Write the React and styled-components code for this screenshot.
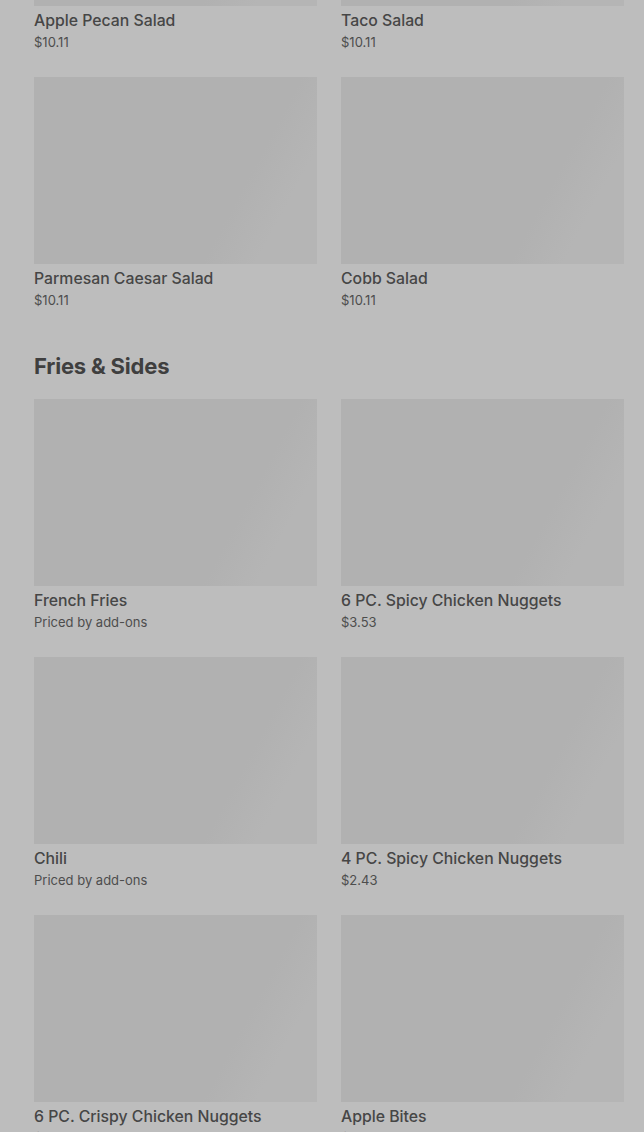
import React from "react";
import styled, { createGlobalStyle } from "styled-components";

const Global = createGlobalStyle`
  html, body { margin: 0; padding: 0; background: #bdbdbd; }
  body { font-family: Inter, "Noto Sans", "Liberation Sans", sans-serif; overflow: hidden; }
`;

const Page = styled.div`
  height: 1132px;
  overflow: hidden;
  background: #bdbdbd;
`;

const Content = styled.div`
  margin-top: -181px;
  padding: 0 20px 0 34px;
`;

const Section = styled.section`
  & + & { margin-top: 42px; }
`;

const Heading = styled.h2`
  margin: 0 0 19px;
  font-size: 22px;
  line-height: 28px;
  font-weight: 700;
  letter-spacing: -0.2px;
  color: #3f3f3f;
`;

const Grid = styled.div`
  display: grid;
  grid-template-columns: 283px 283px;
  column-gap: 24px;
  row-gap: 25px;
`;

const Card = styled.div`
  display: flex;
  flex-direction: column;
`;

const Thumb = styled.div`
  height: 187px;
  background: linear-gradient(118deg, #b1b1b1 0%, #b1b1b1 70%, #b5b5b5 84%, #b5b5b5 100%);
  margin-bottom: 5px;
`;

const Title = styled.div`
  font-size: 15.8px;
  line-height: 20px;
  font-weight: 500;
  color: #464646;
`;

const Price = styled.div`
  margin-top: 1px;
  font-size: 13px;
  line-height: 20px;
  font-weight: 400;
  color: #4d4d4d;
`;

const sections = [
  {
    name: null,
    items: [
      ["Apple Pecan Salad", "$10.11"],
      ["Taco Salad", "$10.11"],
      ["Parmesan Caesar Salad", "$10.11"],
      ["Cobb Salad", "$10.11"],
    ],
  },
  {
    name: "Fries & Sides",
    items: [
      ["French Fries", "Priced by add-ons"],
      ["6 PC. Spicy Chicken Nuggets", "$3.53"],
      ["Chili", "Priced by add-ons"],
      ["4 PC. Spicy Chicken Nuggets", "$2.43"],
      ["6 PC. Crispy Chicken Nuggets", "$3.53"],
      ["Apple Bites", "$1.61"],
    ],
  },
];

export default function App() {
  return (
    <Page>
      <Global />
      <Content>
        {sections.map((s, i) => (
          <Section key={i}>
            {s.name && <Heading>{s.name}</Heading>}
            <Grid>
              {s.items.map(([t, p]) => (
                <Card key={t}>
                  <Thumb />
                  <Title>{t}</Title>
                  <Price>{p}</Price>
                </Card>
              ))}
            </Grid>
          </Section>
        ))}
      </Content>
    </Page>
  );
}
